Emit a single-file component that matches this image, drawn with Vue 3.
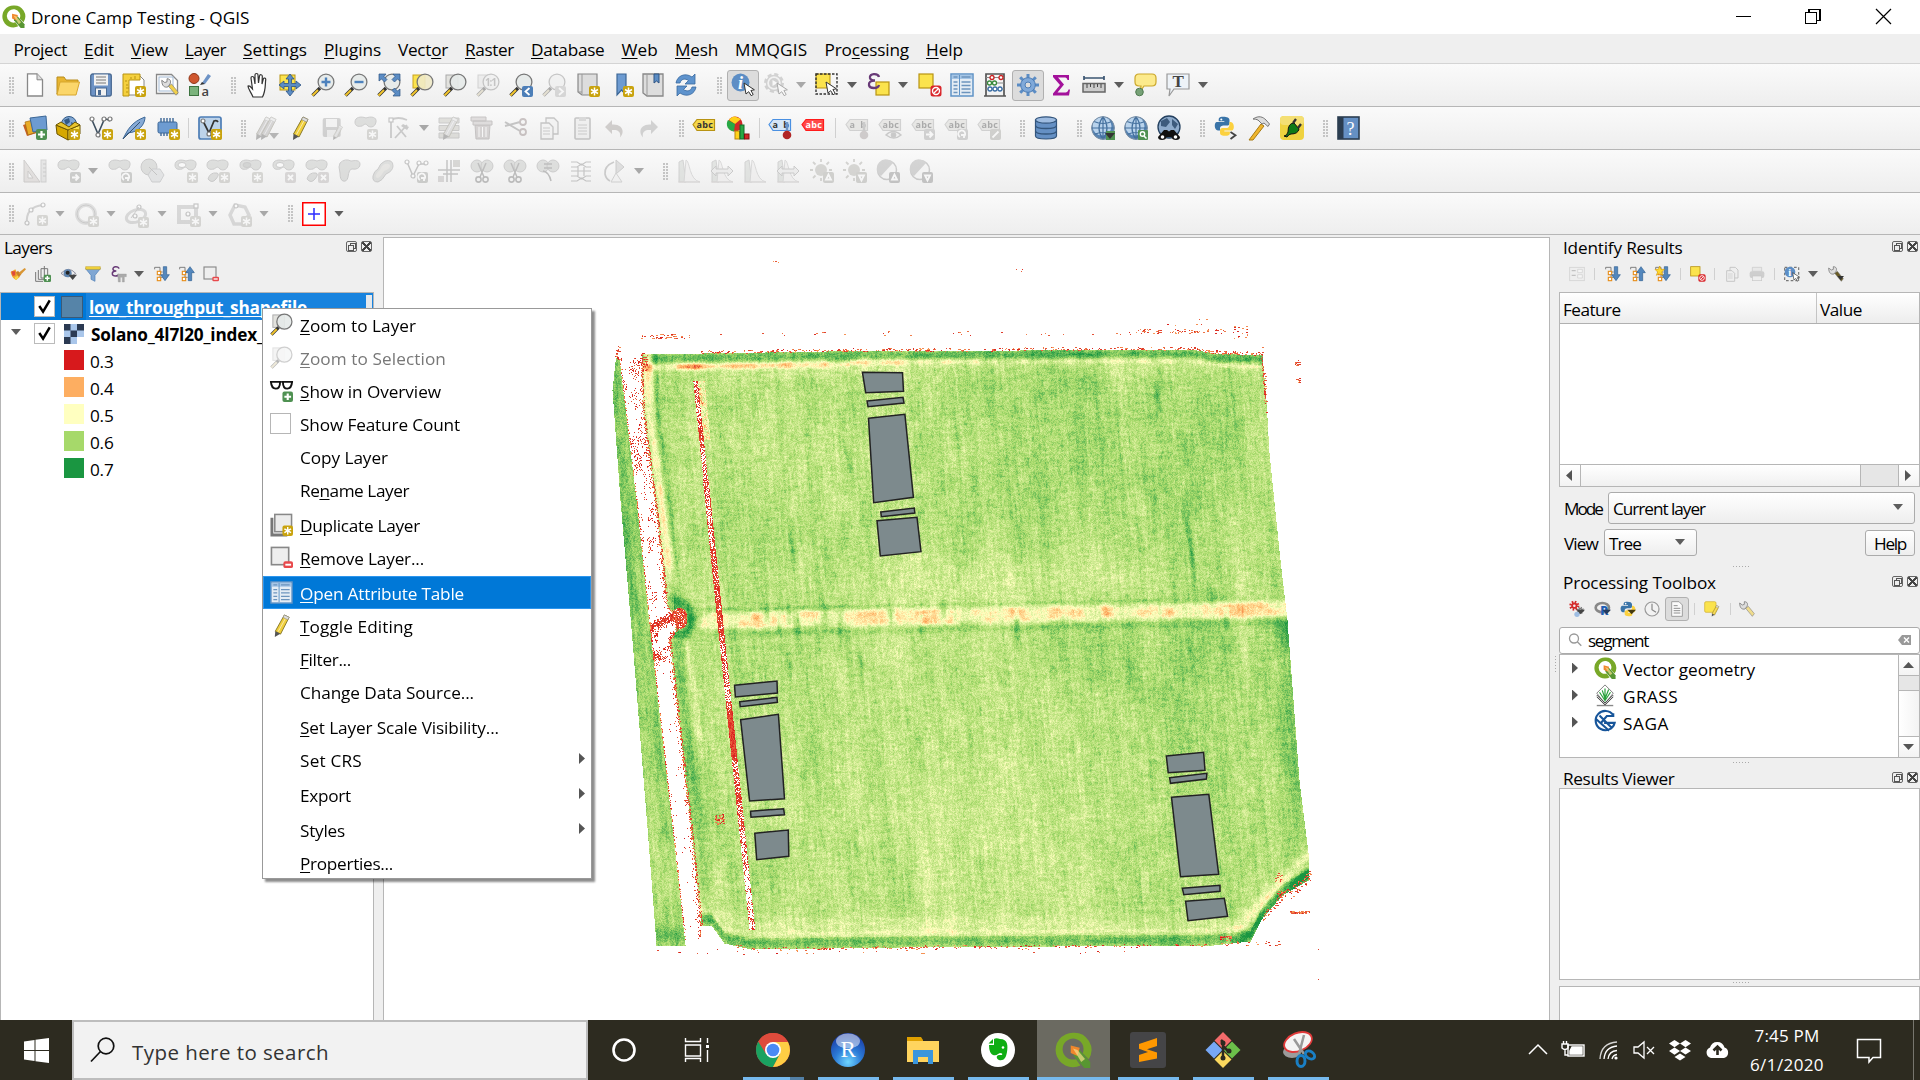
<script setup>
import { ref, onMounted } from 'vue'

/* Adjusts tracking so that a label takes the given width */
const vFit = {
  mounted(el, { value }) {
    if (!value) return
    const w = el.getBoundingClientRect().width
    el.style.letterSpacing = (value - w) / el.textContent.length + 'px'
  }
}
/* "&Open" -> underlined mnemonic */
const mn = (s) => s.replace(/&(.)/, '<u>$1</u>')

/* ---------- icon drawing ---------- */
const star = (c = '#c9a30e') => `<rect x="13" y="13" width="11" height="11" rx="2" fill="${c}"/><path d="M18.500 14.500v8M15 16.500l7 4M22 16.500l-7 4" stroke="#fff" stroke-width="1.500"/>`
const plusB = `<rect x="13" y="13" width="11" height="11" rx="2" fill="#4f9152"/><path d="M18.500 15v7M15 18.500h7" stroke="#fff" stroke-width="2.200"/>`
const badge = (d, c = '#777') => `<rect x="13" y="13" width="11" height="11" rx="2" fill="${c}"/><path d="${d}" stroke="#fff" stroke-width="1.800" fill="none"/>`
const arrowR = 'M15 18.500h6M18.500 15.500l3 3-3 3'
const cross = 'M16 16l5 5M21 16l-5 5'
const rot = 'M16 21a3.500 3.500 0 1 1 4.500-1M20 22v-3h-3'
const up = 'M18.500 15.500l-2.500 5h5z'
const dn = 'M18.500 21.500l-2.500-5h5z'
const handle = `<path d="M9 15l-7.500 7.500" stroke="#333" stroke-width="3.400"/><path d="M7 17l-5.500 5.500" stroke="#f3c62d" stroke-width="2"/>`
const mag = (inner = '', back = '') => `${back}${handle}<circle cx="15" cy="9" r="7.900" fill="#e6eae9" fill-opacity=".9" stroke="#777" stroke-width="1.300"/>${inner}`
const cursor = (x, y) => `<path transform="translate(${x} ${y})" d="M0 0l2 11 2.700-2.300 2.500 4 2-1.200-2.300-4 3.500-.7z" fill="#fff" stroke="#333" stroke-width="1"/>`
const blob = (y = 0) => `<path transform="translate(0 ${y})" d="M1 6c0-5 6-6 11-4 5-2 11-1 10 4-1 6-7 6-9 3-2-2-3 0-5 1C4 11 1 10 1 6z" fill="#b5bab0" stroke="#888" stroke-width="1"/>`
const pencil = (c = '#f0cf3c') => `<path d="M15 1l5 2.500L11 21 5.500 18z" fill="${c}" stroke="#7d6d20" stroke-width=".9"/><path d="M17 3L8.500 18.500" stroke="#fff" stroke-opacity=".6"/><path d="M5.500 18l5.300 2.500L5 24z" fill="#555"/><path d="M15 1l5 2.500-1.500 2.500-5-2.500z" fill="#ddd" stroke="#888" stroke-width=".6"/>`
const tag = (c, s, t = 'abc', tc = '#333', y = 3) => `<path d="M1 ${y + 5.500}l4-5h17.500v11H5z" fill="${c}" stroke="${s}" stroke-width="1.200"/><text x="4.500" y="${y + 9}" font-family="Open Sans,sans-serif" font-weight="700" font-size="9" textLength="16.500" fill="${tc}">${t}</text>`
const globe = `<circle cx="12" cy="12" r="11.500" fill="#5683b3"/><circle cx="11" cy="10" r="9.500" fill="#b9d3ec"/><path d="M12 .5v23M.5 12h23M3 5.500q9 4 18 0M3 18.500q9-4 18 0M12 .5q-8 11.500 0 23M12 .5q8 11.500 0 23" fill="none" stroke="#44709e" stroke-width="1.200"/><circle cx="12" cy="12" r="11.300" fill="none" stroke="#7c8fa3"/>`
const tri = (x, y, c = '#5d5d5d') => `<path d="M${x} ${y}h10l-5 6z" fill="${c}"/>`
const qlogo = `<path d="M12 .5a11.500 11.500 0 1 0 5 21.800l-3-4.200a7 7 0 1 1 4.500-4l4 4A11.500 11.500 0 0 0 12 .5z" fill="#78a828"/><path d="M12 11.500l4.500.5 7 8v4h-4l-7-8z" fill="#589632"/><path d="M10.500 9l6 1.500-1.500 5.500-4.500-2z" fill="#f0872c"/><path d="M12 11l3 1 5 6-2.500 2z" fill="#f5e08a" opacity=".7"/>`
const scis = `<ellipse cx="7" cy="7" rx="6" ry="6" fill="#b5bab0" stroke="#888"/><ellipse cx="17" cy="7" rx="6" ry="6" fill="#b5bab0" stroke="#888"/><path d="M8 4l6 14M16 4L10 18" stroke="#666" stroke-width="1.500"/><circle cx="8.500" cy="20.500" r="2.600" fill="none" stroke="#666" stroke-width="1.600"/><circle cx="15.500" cy="20.500" r="2.600" fill="none" stroke="#666" stroke-width="1.600"/>`
const hist = `<path d="M2 23V3l4-2 3 22z" fill="#b7cbb7" stroke="#999"/><path d="M9 1c4 1 3 20 14 22H7z" fill="#eee6e6" stroke="#aaa"/><path d="M1 23h22" stroke="#c9a9a9"/>`
const wide = `<path d="M1 12l5-5v3h12V7l5 5-5 5v-3H6v3z" fill="#ddd" stroke="#888"/>`
const sun = `<circle cx="11" cy="11" r="6" fill="#a9a38a"/><path d="M11 0v3M11 19v3M0 11h3M19 11h3M3 3l2.500 2.500M19 3l-2.500 2.500M3 19l2.500-2.500" stroke="#a09a80" stroke-width="1.800"/>`
const contrast = `<circle cx="11" cy="11" r="9.500" fill="#f2f2f2" stroke="#888" stroke-width="1.500"/><path d="M17 4A9 9 0 1 0 5 17z" fill="#9c9c9c"/>`
const tree = (arrow) => `<path d="M1 2h8v20M9 9h4M9 17h4M1 2v3" fill="none" stroke="#777" stroke-width="1.400"/><rect x="5" y="8" width="5" height="5" fill="#fff" stroke="#e88f1c" stroke-width="1.700"/><rect x="5" y="17" width="5" height="5" fill="#fff" stroke="#e88f1c" stroke-width="1.700"/><path d="${arrow}" fill="#5387bd" stroke="#2f5f93"/>`
const aDown = 'M14 1h5v12h4l-6.500 9-6.500-9h4z'
const aUp = 'M14 22h5V10h4L16.500 1 10 10h4z'
const gear = (cx, cy, r, c) => `<circle cx="${cx}" cy="${cy}" r="${r}" fill="none" stroke="${c}" stroke-width="${r * .75}" stroke-dasharray="${r * .4} ${r * .385}"/><circle cx="${cx}" cy="${cy}" r="${r * .6}" fill="none" stroke="${c}" stroke-width="${r * .5}"/>`
const table = `<rect x="1" y="1" width="22" height="22" fill="#e4ecf4" stroke="#5f93c6" stroke-width="1.500"/><rect x="2" y="2" width="20" height="4" fill="#a5c5e6"/><path d="M9.500 2v20" stroke="#5f93c6"/><path d="M3.500 4h4M11.500 4h9M3.500 9h4M11.500 9h9M3.500 12.500h4M11.500 12.500h9M3.500 16h4M11.500 16h9M3.500 19.500h4M11.500 19.500h9" stroke="#6c94bd" stroke-width="1.300"/>`
const wrench = (c1, c2) => `<path d="M10 11l4-3 9 11-3 4z" fill="${c2}" stroke="#777" stroke-width=".8"/><path d="M1 3l4 3 3-1V1c4 0 6 3 4 7l-3 4c-4 1-8-1-8-9z" fill="${c1}" stroke="#666"/>`
const py = `<path d="M11 1c-6 0-5.500 2-5.500 5H12v1H3c-3 1-3 9 1.500 10H7v-3c0-2 2-3 4-3h4c2 0 3-1 3-3V5c0-3-3-4-7-4z" fill="#3a74a8"/><path d="M13 23c6 0 5.500-2 5.500-5H12v-1h9c3-1 3-9-1.500-10H18v3c0 2-1 4-3 4h-5c-2 0-3 1-3 3v3c0 2 3 3 6 3z" fill="#fcd13f"/><circle cx="8.500" cy="4" r="1.200" fill="#fff"/>`
const node = 'fill="#fff" stroke="#777" stroke-width="1.200"'

const icons = {
  qlogo,
  new: `<path d="M4.500 .8h9.500l5.500 6V23h-15z" fill="#fff" stroke="#888" stroke-width="1.300"/><path d="M14 .8v6h5.500" fill="#ddd" stroke="#888"/>`,
  open: `<path d="M1 21V4h7l2 3h12v4H5z" fill="#e8b531" stroke="#b98d1c"/><path d="M4 9h19.500L20 22H1z" fill="#fbd66a" stroke="#d7a62d"/>`,
  save: `<rect x="1.700" y="1" width="20.600" height="22" rx="2" fill="#6d93c6" stroke="#4b6b93" stroke-width="1.300"/><rect x="5" y="1.500" width="14" height="11" fill="#f2f2f2"/><path d="M7 4h10M7 7h10M7 10h10" stroke="#777" stroke-width="1.200"/><rect x="6.500" y="15" width="11" height="8" fill="#f2f2f2" stroke="#4b6b93"/><rect x="9" y="17" width="3" height="5" fill="#4b6b93"/>`,
  newlayout: `<path d="M2 2h15l5 5v15H2z" fill="#fff" stroke="#888"/><path d="M1 1h17v6H7v16H1z" fill="#f5d03d" stroke="#b89313"/><path d="M4 7v2M4 12h2M4 15h3M4 19h2M9 4v2M13 3v3" stroke="#b89313"/>${star()}`,
  mgr: `<path d="M1.500 1.500h15l6 6v13h-21z" fill="#fff" stroke="#888" stroke-width="1.300"/><rect x="4" y="4" width="14" height="14" fill="none" stroke="#a3bad4"/><g transform="translate(6 5) scale(.75)">${wrench('#ddd', '#f0cf4a')}</g>`,
  style: `<circle cx="6" cy="5.500" r="5" fill="#d0572f" stroke="#8f3517"/><path d="M14 10l6-9 3 2-6 8z" fill="#6d93c6"/><path d="M12 12l2-3 3 2z" fill="#333"/><rect x="1.500" y="13.500" width="9" height="9" fill="#7bb37c" stroke="#3d7340"/><text x="13.500" y="23" font-family="Open Sans" font-weight="600" font-size="13" fill="#444">a</text>`,
  hand: `<path d="M8 24c-2-5-5-8-5-11 2-1 3.500 2 4.500 3L6 5c0-2 2.600-2 3 0l1 6V2c0-2 3-2 3 0l.5 8 1-7c.4-2 3-1.500 2.800.5L17 11l1.300-5c.7-1.700 2.800-1 2.400.8C20 12 21 17 17.500 24z" fill="#fff" stroke="#333" stroke-width="1.200"/>`,
  pan: `<rect x="2" y="2" width="15" height="15" fill="#fbe34d" stroke="#b89313"/><path d="M12 1l4 5h-2.500v4.500H18V8l5 4-5 4v-2.500h-4.500V18H16l-4 5-4-5h2.500v-4.500H6V16l-5-4 5-4v2.500h4.500V6H8z" fill="#5b8cc4" stroke="#2f5483" stroke-width=".8"/>`,
  zin: mag('<path d="M15 4.500v9M10.500 9h9" stroke="#4d82bd" stroke-width="2.400"/>'),
  zout: mag('<path d="M10.500 9h9" stroke="#4d82bd" stroke-width="2.400"/>'),
  zfull: mag('<path d="M2 1h7L7 3.500l3 3L7.500 9l-3-3L2 8zM23 1h-7l2 2.500-3 3L17.500 9l3-3L23 8zM23 23h-7l2-2.500-3-3 2.500-2.500 3 3 2.500-2z" fill="#5b8cc4" stroke="#2f5483" stroke-width=".7"/>'),
  zsel: mag('', '<rect x="3" y="2" width="12" height="13" fill="#fbe34d" stroke="#c9a41f"/>').replace('#e6eae9', '#efeac8'),
  zlay: mag('', '<rect x="3" y="2" width="12" height="13" fill="#e2e2de" stroke="#aaa"/>'),
  z11: mag('<text x="9" y="13" font-family="Open Sans" font-weight="700" font-size="10" textLength="12" fill="#777">1:1</text>', '<rect x="2" y="2" width="12" height="13" fill="#ddd" stroke="#999"/>'),
  zlast: mag(badge('M20.500 15l-4 3.500 4 3.500', '#4d7fb8')),
  znext: mag(badge('M17 15l4 3.500-4 3.500', '#aaa')),
  newview: `<path d="M2 1h19v21H6l-4-3z" fill="#ddd" stroke="#888" stroke-width="1.200"/><path d="M6 1v20M2 19h4" stroke="#999"/>${star()}`,
  newbm: `<path d="M7 1h9v21l-4.500-5L7 22z" fill="#6d9bd1" stroke="#3c6796" stroke-width="1.200"/>${star()}`,
  bm: `<path d="M2 1h20v22H6l-4-3z" fill="#ddd" stroke="#888" stroke-width="1.300"/><path d="M6 1v21" stroke="#999"/><path d="M13 1h5v9l-2.500-2-2.500 2z" fill="#5b8cc4" stroke="#2f5483"/>`,
  refresh: `<path d="M2 10C3 3 11-1 18 4l3-3v10H11l3.500-3.500C11 5 7 6 6 10z" fill="#5e93cd" stroke="#3a6a9f" stroke-width=".8"/><path d="M22 14c-1 7-9 11-16 6l-3 3V13h10l-3.500 3.500C13 19 17 18 18 14z" fill="#5e93cd" stroke="#3a6a9f" stroke-width=".8"/>`,
  ident: `<circle cx="9.500" cy="9.500" r="9" fill="#5d8ec5"/><text x="7" y="16" font-family="Liberation Serif" font-style="italic" font-weight="700" font-size="18" fill="#fff">i</text>${cursor(13, 10)}`,
  action: `<circle cx="10" cy="10" r="8.500" fill="none" stroke="#999" stroke-width="3" stroke-dasharray="4 2.670"/><circle cx="10" cy="10" r="7.500" fill="#eee" stroke="#999" stroke-width="1.500"/><circle cx="10" cy="10" r="5" fill="#999"/><path d="M8.500 7l5 3-5 3z" fill="#fff"/>${cursor(13, 10)}`,
  select: `<rect x="1" y="1" width="14" height="14" fill="#fbe34d" stroke="#b89313"/><rect x="1" y="1" width="21" height="20" fill="none" stroke="#333" stroke-width="1.400" stroke-dasharray="2.500 1.500"/>${cursor(11, 9)}`,
  eps: `<rect x="9" y="9" width="13" height="13" fill="#fbe34d" stroke="#b89313" stroke-width="1.200"/><path d="M12 4C11 0 2 0 3 5c.5 2 3 2.500 5 2.500C4 7.500 1.500 9 2 12c.5 4 9 4 10 0" fill="none" stroke="#683a77" stroke-width="2.300"/>`,
  desel: `<rect x="1" y="1" width="14" height="14" fill="#fbe34d" stroke="#b89313" stroke-width="1.200"/><rect x="12.500" y="12.500" width="11" height="11" rx="2.500" fill="#d9262b"/><circle cx="18" cy="18" r="3.500" fill="none" stroke="#fff" stroke-width="1.400"/><path d="M15.700 20.300l4.600-4.600" stroke="#fff" stroke-width="1.300"/>`,
  table,
  abacus: `<path d="M3 23V1h18v22M1 23h22" fill="none" stroke="#555" stroke-width="1.700"/><path d="M3 4.500h18M3 10h18M3 16h18" stroke="#888"/><g fill="#fff" stroke-width="1.300"><g stroke="#cc2222"><circle cx="9" cy="4.500" r="2"/><circle cx="18" cy="4.500" r="2"/></g><g stroke="#38893b"><circle cx="6.500" cy="10" r="2"/><circle cx="11.500" cy="10" r="2"/></g><g stroke="#3a6da4"><circle cx="7" cy="16" r="2"/><circle cx="12" cy="16" r="2"/><circle cx="17" cy="16" r="2"/></g></g>`,
  gear: `<path d="M12 1v22M1 12h22M4.200 4.200l15.600 15.600M19.800 4.200L4.200 19.800" stroke="#5b8cc4" stroke-width="3"/><circle cx="12" cy="12" r="7.300" fill="#80a9d9" stroke="#4c7db6"/><circle cx="12" cy="12" r="3" fill="#ddd" stroke="#4c7db6"/>`,
  sigma: `<path d="M4 2h16v5h-1.500C18 5 17 4.500 15 4.500H9l6 7-6.500 8H15c2.500 0 4-.5 4.500-3H21l-1 6H4v-2l7-8.500L4 4z" fill="#a3119b"/>`,
  ruler: `<path d="M2 5h20M2 3v4M22 3v4" stroke="#3b5572" stroke-width="1.700"/><rect x="1" y="10.500" width="22" height="8.500" fill="#ccc" stroke="#666" stroke-width="1.500"/><path d="M5 11v4M8.500 11v3M12 11v4M15.500 11v3M19 11v4" stroke="#444"/>`,
  tip: `<path d="M6 1h13q4 0 4 4v4q0 4-4 4h-8l-4 6 1-6H6q-4 0-4-4V5q0-4 4-4z" fill="#fcea8c" stroke="#cba72b" stroke-width="1.200"/><circle cx="6.500" cy="19" r="3.800" fill="#77a177" stroke="#4f7a50"/>`,
  text: `<path d="M1 1h22v15H8l-5 7 1-7H1z" fill="#eef3f8" stroke="#999" stroke-width="1.200"/><text x="6.500" y="14" font-family="Liberation Serif" font-size="17" font-weight="700" fill="#444">T</text>`,

  dsm: `<path d="M0 9l12-4 5 11L4 20z" fill="#c65f22"/><path d="M2 6l12-3 3 12-12 4z" fill="#e9ac28" stroke="#a36c10" stroke-width=".7"/><path d="M7 2l16-2 1 14-14 2z" fill="#6d9bd1" stroke="#3c6796"/>${plusB}`,
  geop: `<circle cx="13" cy="8" r="7.500" fill="#7fa6d3" stroke="#335a85"/><path d="M8 4l5-2 1 4-4 3zM15 6l4 2-3 4z" fill="#335a85"/><path d="M0 9l12 5v10L1 18z" fill="#d6a800" stroke="#6c5500"/><path d="M12 14l12-5v9l-12 6z" fill="#fbe34d" stroke="#6c5500"/><path d="M0 9l5-3 8 5 6-5 5 3-12 5z" fill="#e9c52c" stroke="#6c5500"/>${star()}`,
  vnew: `<path d="M3 4l6 14 6-14q3-2 6 1" fill="none" stroke="#3d4f5f" stroke-width="1.600"/><circle cx="3" cy="3" r="2" ${node}/><circle cx="9" cy="19" r="2" ${node}/><circle cx="15" cy="3" r="2" ${node}/><circle cx="21" cy="3" r="2" ${node}/>${star()}`,
  feather: `<path d="M1 23C5 15 9 6 23 1c0 5-3 12-12 15L6 17z" fill="#86aad6" stroke="#3c6796"/><path d="M1 23L18 6" stroke="#35516f"/>${star()}`,
  chip: `<path d="M5 2v18M8 2v18M11 2v18M14 2v18M17 2v18" stroke="#3c6796" stroke-width="1.400"/><rect x="2" y="6" width="19" height="11" rx="1.500" fill="#6d9bd1" stroke="#3c6796"/>${star()}`,
  vvirt: `<rect x="1" y="1" width="22" height="22" rx="2" fill="#bdd3ea" stroke="#4c7db6" stroke-width="1.700"/><path d="M5 5l6 12 5-12q3-1 4 1" fill="none" stroke="#333" stroke-width="1.700"/><circle cx="5" cy="5" r="2" ${node}/><circle cx="11" cy="18" r="2" ${node}/>${star()}`,
  pencils: `<g transform="translate(-4 0)">${pencil('#a99f9f')}</g><g transform="translate(1 0)">${pencil('#a99f9f')}</g>${tri(14, 17, '#555')}`,
  pencil: pencil(),
  saveEd: `<rect x="1.700" y="2" width="18" height="19" rx="2" fill="#999"/><rect x="5" y="3" width="11" height="8" fill="#eee"/><rect x="6" y="14" width="9" height="7" fill="#ddd"/><g transform="translate(9 9) scale(.62)">${pencil('#bbb')}</g>`,
  addblob: blob() + star('#aaa68c'),
  nodes: `<path d="M4 22V4q7-4 16 0M10 10l9 11M20 9L8 22" fill="none" stroke="#888" stroke-width="1.800"/><path d="M16 8l6 3-2 3-6-4z" fill="#888"/><rect x="2" y="2" width="4" height="4" ${node}/>`,
  rows: `<path d="M1 2h20v5H1zM1 9.500h20v5H1zM1 17h20v5H1z" fill="#bfbb98" stroke="#888"/>${pencil('#bbb')}`,
  trash: `<path d="M5 9h15l-1 14H6z" fill="#b89a9a" stroke="#887070"/><path d="M3 5h19v4H3zM1 1h15v4H1z" fill="#c9b1b1" stroke="#887070"/><path d="M9 11v10M12.500 11v10M16 11v10" stroke="#fff"/>`,
  cut: `<path d="M1 6l15 9M1 10l15-4" stroke="#777" stroke-width="2"/><circle cx="19" cy="6" r="3" fill="none" stroke="#a66" stroke-width="1.800"/><circle cx="19" cy="16" r="3" fill="none" stroke="#a66" stroke-width="1.800"/>`,
  copy: `<path d="M9 2h8l4 4v12H9z" fill="#eee" stroke="#777" stroke-width="1.300"/><path d="M4 7h8l4 4v12H4z" fill="#eee" stroke="#777" stroke-width="1.300"/><path d="M6 12h7M6 15h7M6 18h7" stroke="#888"/>`,
  paste: `<rect x="5" y="2" width="15" height="21" rx="1" fill="#e5e5e5" stroke="#777" stroke-width="1.600"/><rect x="9" y="1" width="7" height="4" fill="#aaa"/><path d="M8 9h9M8 12h9M8 15h9M8 18h9" stroke="#888"/>`,
  undo: `<path d="M2 11l7-7v4.500c9-1 14 6 8 13 1-5-1-8-8-7.500V18z" fill="#a58c7c"/>`,
  redo: `<path d="M22 11l-7-7v4.500c-9-1-14 6-8 13-1-5 1-8 8-7.500V18z" fill="#999"/>`,
  abcY: tag('#f6d84a', '#b89313'),
  diag: `<circle cx="9" cy="8" r="7.500" fill="#d02828"/><path d="M9 8L9 .5A7.500 7.500 0 0 0 3 4z" fill="#ffd21a"/><path d="M9 8L2 4a7.500 7.500 0 0 0 6 11.500z" fill="#27a845"/><path d="M9 .5v7.500l6-5z" fill="#ffd21a"/><rect x="9" y="15" width="4.500" height="8" fill="#ffd21a" stroke="#b8860b"/><rect x="14" y="9" width="4" height="14" fill="#27a845" stroke="#136b29"/><rect x="18.500" y="18" width="4.500" height="5" fill="#d02828" stroke="#801111"/>`,
  abcB: tag('#d6e6f7', '#4a90e2', 'ab') + `<path d="M19 6v12" stroke="#6d93c6" stroke-width="2.500"/><circle cx="19" cy="19" r="4.300" fill="#b12525"/>`,
  abcR: tag('#ff4a4a', '#ff1a1a', 'abc', '#fff'),
  g1: tag('#d5d2bd', '#999', 'ab') + `<path d="M19 6v12" stroke="#888" stroke-width="2.500"/><circle cx="19" cy="19" r="4.300" fill="#a88"/>`,
  g2: tag('#d5d2bd', '#999') + `<path d="M8 19q7-7 15 0q-7 6-15 0z" fill="#eee" stroke="#888" stroke-width="1.400"/><circle cx="15.500" cy="19" r="2.800" fill="#888"/>`,
  g3: tag('#d5d2bd', '#999') + badge(arrowR, '#999'),
  g4: tag('#d5d2bd', '#999') + badge(rot, '#999'),
  g5: tag('#d5d2bd', '#999') + badge('M15.500 21.500l6-6', '#999981'),
  dbase: `<path d="M1.500 4v16c0 4 21 4 21 0V4z" fill="#6590c4" stroke="#33557c" stroke-width="1.200"/><ellipse cx="12" cy="4" rx="10.500" ry="3.200" fill="#9dbbe0" stroke="#33557c" stroke-width="1.200"/><path d="M1.500 9.500c0 4 21 4 21 0M1.500 15c0 4 21 4 21 0" fill="none" stroke="#33557c" stroke-width="1.300"/>`,
  gl1: globe + `<rect x="15" y="15" width="9" height="9" fill="#4f9152"/><path d="M14 17h10l-5 6z" fill="#333"/>`,
  gl2: globe + `<rect x="14" y="14" width="10" height="10" rx="1" fill="#4f9152"/><circle cx="18.500" cy="18" r="2.200" fill="none" stroke="#fff" stroke-width="1.400"/><path d="M20 20l2.500 2.500" stroke="#fff" stroke-width="1.500"/>`,
  gl3: `<circle cx="12" cy="11" r="11" fill="#8eabcb" stroke="#24405f" stroke-width="1.300"/><path d="M4 5l6-3 3 4-4 5-5-1zM15 3l6 5-3 5-3-4z" fill="#3d5b7c"/><path d="M7 14h3l2 1.500 2-1.500h3l6 7q0 3-4 3t-4.500-3h-5Q9 24 5 24t-4-3z" fill="#111"/><circle cx="5.500" cy="21" r="1.800" fill="#fff"/><circle cx="18.500" cy="21" r="1.800" fill="#fff"/>`,
  py: `<g transform="scale(.86)">${py}</g><path d="M16.500 16l5 3.200-5 3.800" fill="none" stroke="#444" stroke-width="1.800"/>`,
  hammer: `<path d="M14 8l3 2L6 24H2z" fill="#f0b62d" stroke="#a87b12"/><path d="M6 3c6-4 10-2 13 1l3.500 4-1.500 2.500-4-3.500-2 1-4-4q-2-1-5-1z" fill="#ddd" stroke="#777"/>`,
  plug: `<rect width="24" height="24" rx="4" fill="#efd23f"/><rect width="24" height="9" rx="4" fill="#f4df74"/><path d="M4 20q3 0 4-4 0-9 6-9l5 6q-1 5-8 5-2 0-4 3z" fill="#0f7a17" stroke="#111"/><path d="M13 7l3-4M18 12l3-4" stroke="#333" stroke-width="2.300"/>`,
  help: `<rect x="1" y="1" width="21" height="22" fill="#6590c4" stroke="#2b3d50" stroke-width="1.600"/><rect x="1" y="1" width="5.500" height="22" fill="#2b3d50"/><text x="9.500" y="18.500" font-family="Liberation Serif" font-size="18" fill="#fff">?</text>`,

  cad: `<path d="M1 1v22h16z" fill="#d5bdb0" stroke="#998880"/><path d="M5 12v7h5z" fill="#f2f2f2" stroke="#998880"/><rect x="18" y="1" width="5" height="22" fill="#ccc" stroke="#999"/><path d="M20 5h3M20 9h3M20 13h3M20 17h3" stroke="#888"/>`,
  b1: blob() + badge(arrowR, '#8c8f84'),
  b2: blob() + badge(rot, '#8c8f84'),
  b3: `<circle cx="9" cy="8" r="8" fill="#b5bab0" stroke="#888"/><path d="M12 10h8l4 6-4 7h-8l-4-7z" fill="#c2ccd8" stroke="#8a95a3"/><path d="M9 8l8 8" stroke="#777"/>`,
  b4: blob() + `<ellipse cx="8" cy="6" rx="4" ry="2.500" fill="#fff" stroke="#888"/>` + star('#aaa68c'),
  b5: blob() + `<path d="M2 20q2-7 9-6 3 1-1 6t-8 0z" fill="#b5bab0" stroke="#888"/>` + star('#aaa68c'),
  b6: blob() + `<ellipse cx="8" cy="6" rx="4" ry="2.500" fill="#9a9f95" stroke="#888"/>` + star('#aaa68c'),
  b7: blob() + `<ellipse cx="8" cy="6" rx="4" ry="2.500" fill="#fff" stroke="#888"/>` + badge(cross, '#b6a4a4'),
  b8: blob() + `<path d="M2 20q2-7 9-6 3 1-1 6t-8 0z" fill="#b5bab0" stroke="#888"/>` + badge(cross, '#b6a4a4'),
  b9: `<path d="M2 4q5-5 11-2 10-2 9 4-1 5-8 4-3 0-4 8-1 5-5 4-3-1-3-8-2-7 0-10z" fill="#b5bab0" stroke="#888"/>`,
  b10: `<path d="M14 2q8-2 8 5 0 5-7 8-4 7-8 8-6 0-5-6 1-5 5-7 2-6 7-8z" fill="#b5bab0" stroke="#888"/><path d="M14 5q5-1 5 2t-6 5q-4 7-6 7-3 0-2-3 1-3 4-5 2-5 5-6z" fill="#d5cdb4"/>`,
  b11: `<path d="M3 3l6 14 6-12 7 0" fill="none" stroke="#777" stroke-width="1.500"/><circle cx="3" cy="3" r="2" ${node}/><circle cx="9" cy="17" r="2" ${node}/><circle cx="15" cy="4" r="2" ${node}/><circle cx="22" cy="4" r="2" ${node}/>` + badge(rot, '#8c8f84'),
  b12: `<path d="M10 1v22M14 1v22M1 11h22M6 15h15" stroke="#777" stroke-width="1.500"/><rect x="16" y="1" width="7" height="7" fill="#aaa68c"/><rect x="1" y="17" width="6" height="6" fill="#b6a4a4"/>`,
  sc: scis,
  b13: `<ellipse cx="7" cy="7" rx="6" ry="6" fill="#b5bab0" stroke="#888"/><ellipse cx="17" cy="7" rx="6" ry="6" fill="#b5bab0" stroke="#888"/><path d="M8 5h8M8 9h8M7 12q6 1 8 10" stroke="#666" stroke-width="1.500" fill="none"/>`,
  b14: `<path d="M2 3h6l3 2h3l3-2h5M2 8h6l3-2h3l3 2h5M2 12h20M2 17h6l3 2h3l3-2h5M2 22h6l3-2h3l3 2h5M9 8v9M15 8v9" stroke="#777" stroke-width="1.200" fill="none"/>`,
  b15: `<path d="M14 1l8 7-8 7z" fill="#bbb" stroke="#888"/><path d="M9 23l5-9 6 9z" fill="#eee" stroke="#999"/><path d="M12 3Q2 7 3 15q1 5 5 7" fill="none" stroke="#888" stroke-width="1.700"/>`,
  h1: hist, h2: hist + wide,
  s1: sun + badge(up, '#999981'), s2: sun + badge(dn, '#999981'),
  c1: contrast + badge(up), c2: contrast + badge(dn),

  d1: `<path d="M3 22Q1 5 19 3" fill="none" stroke="#999" stroke-width="2"/><circle cx="3" cy="21" r="2" ${node}/><circle cx="19" cy="3" r="2" ${node}/><circle cx="7" cy="8" r="2" ${node}/>` + star('#aaa68c'),
  d2: `<circle cx="11" cy="11" r="9" fill="none" stroke="#bbb" stroke-width="4"/><circle cx="11" cy="11" r="9" fill="none" stroke="#888"/>` + star('#aaa68c'),
  d3: `<ellipse cx="11" cy="12" rx="10" ry="6" transform="rotate(-20 11 12)" fill="none" stroke="#aaa" stroke-width="3"/><circle cx="10" cy="12" r="2" ${node}/><circle cx="14" cy="3" r="2" ${node}/><path d="M6 14l8-11" stroke="#888"/>` + star('#aaa68c'),
  d4: `<rect x="2" y="4" width="17" height="15" fill="none" stroke="#aaa" stroke-width="4"/><circle cx="11" cy="11" r="2" ${node}/><rect x="17" y="1" width="4" height="4" ${node}/>` + star('#aaa68c'),
  d5: `<path d="M7 2l10 2 4 8-7 9H6l-4-9z" fill="none" stroke="#aaa" stroke-width="3.500"/><circle cx="8" cy="3" r="2" ${node}/>` + star('#aaa68c'),
  plusbox: `<rect x=".75" y=".75" width="22.500" height="22.500" fill="#fff" stroke="#f00" stroke-width="1.500"/><path d="M12 6v12M6 12h12" stroke="#2b2bff" stroke-width="1.500"/>`,

  brush: `<path d="M1 9l7-4 2 4 5 7-6 5Q2 17 1 9z" fill="#f0a52d"/><path d="M2 8l6 0 0 6-4 1z" fill="#df4b3c"/><path d="M7 17l6-3-1 5-4 2z" fill="#f6d84a"/><path d="M9 10l3-3 5 6-4 3z" fill="#c77f2a"/><path d="M13 10l9-7 2 2-8 8z" fill="#d99634"/>`,
  addgrp: `<path d="M1 9v14h11M5 6v14h12M9 4h10v14H9zM14 0v14" fill="none" stroke="#777" stroke-width="1.500"/>${plusB}`,
  eye: `<path d="M0 11Q11-1 22 11 11 21 0 11z" fill="#eee" stroke="#889" stroke-width="1.400"/><circle cx="10" cy="11" r="6" fill="#5d83ae"/><circle cx="10" cy="10" r="3" fill="#222"/><path d="M11 13h13l-6.500 8z" fill="#444"/>`,
  funnel: `<path d="M1 4h22l-8 10v9l-6-3v-6z" fill="#7fa6d3" stroke="#4c7db6"/><path d="M1 1h22v4H1z" fill="#f4d53e" stroke="#b89313" stroke-width=".7"/>`,
  epsf: `<path d="M12 4C11 0 2 0 3 5c.5 2 3 2.500 5 2.500C4 7.500 1.500 9 2 12c.5 4 9 4 10 0" fill="none" stroke="#683a77" stroke-width="2.300"/><path d="M10 12h13v4l-3 0v8h-3v-7h-3v7h-3z" fill="#aaa" stroke="#999" stroke-width=".5"/>`,
  exp: tree(aDown), col: tree(aUp),
  expnew: tree(aDown) + `<path d="M7 0l2 5 5 0-4 4 2 5-5-3-5 3 2-5-4-4 5 0z" fill="#ffd92e" stroke="#d79d0a"/>`,
  rem: `<rect x="1.500" y="1.500" width="18" height="18" fill="#eee" stroke="#888" stroke-width="1.700"/><rect x="14" y="16" width="10" height="7" rx="2" fill="#e8494c"/><path d="M16 19.500h6" stroke="#fff" stroke-width="2"/>`,
  dup: `<path d="M2 5v18h16" fill="none" stroke="#777" stroke-width="3"/><rect x="5" y="1.500" width="17.500" height="18" fill="#ececec" stroke="#888" stroke-width="1.600"/>${star()}`,
  form: `<rect x="1" y="2" width="22" height="20" fill="#eee" stroke="#aaa" stroke-width="1.300"/><path d="M4 7h6M4 14h6" stroke="#777" stroke-width="2"/><path d="M13 5h7v5h-7zM13 13h7v5h-7z" fill="#fff" stroke="#999"/>`,
  printer: `<path d="M5 2h14v6H5z" fill="#ddd" stroke="#888"/><rect x="1" y="8" width="22" height="10" rx="3" fill="#999"/><rect x="5" y="15" width="14" height="7" fill="#eee" stroke="#888"/>`,
  identm: `<rect x="1" y="2" width="21" height="20" fill="none" stroke="#777" stroke-width="1.800" stroke-dasharray="4 3"/><circle cx="9" cy="9" r="8" fill="#5d8ec5"/><text x="6.500" y="15" font-family="Liberation Serif" font-weight="700" font-size="16" fill="#fff">i</text>${cursor(13, 10)}`,
  wrench: wrench('#ddd', '#f0dc8c'),
  wrenchd: wrench('#ddd', '#695b25') + tri(14, 15, '#333'),
  toolb: gear(8, 7, 5.500, '#d42a2a') + gear(17, 14, 4, '#777') + `<circle cx="12" cy="20" r="4" fill="#9ebde2"/><path d="M11 13h13l-6.500 7z" fill="#444"/>`,
  rproj: `<ellipse cx="11" cy="10" rx="10" ry="7" fill="none" stroke="#888" stroke-width="4"/><text x="8" y="21" font-family="Open Sans" font-weight="800" font-size="18" fill="#1f5fb4">R</text><path d="M11 13h13l-6.500 7z" fill="#233a5c"/>`,
  pyd: py + `<path d="M11 13h13l-6.500 7z" fill="#443a10"/>`,
  clock: `<circle cx="12" cy="12" r="10.500" fill="#f2f2f2" stroke="#999" stroke-width="1.800"/><path d="M12 4v9l6 4" fill="none" stroke="#888" stroke-width="1.800"/>`,
  doc: `<path d="M4 1h11l5 5v17H4z" fill="#fafafa" stroke="#999" stroke-width="1.400"/><path d="M7 7h6M7 11h10M7 14.500h10M7 18h10" stroke="#888" stroke-width="1.400"/>`,
  note: `<rect x="1" y="1" width="17" height="16" rx="2" fill="#fbe34d" stroke="#d0ae2a"/><g transform="translate(8 6) scale(.72)">${pencil()}</g>`,
  specs: `<path d="M0 3h24" stroke="#111" stroke-width="1.600"/><path d="M1 3h9.500q0 7-4.500 7T1 3zM13.500 3H23q-.5 7-5 7t-4.500-7z" fill="#fff" stroke="#111" stroke-width="2"/>${plusB}`,
  grass: `<path d="M12 1l9 9-9 11-9-11z" fill="#fff" stroke="#777"/><path d="M3 12l9 9 9-9M3 14l9 9 9-9" fill="none" stroke="#333"/><path d="M12 19V5M12 18L6 9M12 18l6-9M12 16L9 7M12 16l4-10" stroke="#27a03a" stroke-width="1.300"/><path d="M3 23.500h18" stroke="#888" stroke-width="1.500"/>`,
  saga: `<path d="M21 4.500A10.500 10.500 0 1 0 22.500 13H11M2.500 9l14 12.500M6 5l13 13M21 2.500v3h-7l-6 7" fill="none" stroke="#17559a" stroke-width="2.300"/>`
}

/* Turns centre positions into gaps of a flex row */
const sizes = { grip: 7, sep: 1, arrow: 10, arrowg: 10 }
const row = (list, base = 24) => {
  let end = 0
  return list.map(([n, x, st]) => {
    const w = sizes[n] || base
    const gap = x - w / 2 - end
    end = x + w / 2
    return { n, gap, w, st }
  })
}
const G = 'off'
const bars = [
  row([['grip', 11], ['new', 35], ['open', 68], ['save', 101], ['newlayout', 134], ['mgr', 167], ['style', 200], ['grip', 233], ['hand', 257], ['pan', 290], ['zin', 323], ['zout', 356], ['zfull', 389], ['zsel', 422], ['zlay', 455], ['z11', 488, G], ['zlast', 521], ['znext', 554, G], ['newview', 588], ['newbm', 622], ['bm', 653], ['refresh', 686], ['grip', 719], ['ident', 743, 'on'], ['action', 776, G], ['arrowg', 801], ['select', 827], ['arrow', 852], ['eps', 879], ['arrow', 903], ['desel', 930], ['table', 962], ['abacus', 995], ['gear', 1028, 'on'], ['sigma', 1061], ['ruler', 1094], ['arrow', 1119], ['tip', 1145], ['text', 1178], ['arrow', 1203]]),
  row([['grip', 11], ['dsm', 35], ['geop', 68], ['vnew', 101], ['feather', 134], ['chip', 168], ['sep', 188.5], ['vvirt', 210], ['grip', 243], ['pencils', 267, G], ['pencil', 300], ['saveEd', 333, G], ['addblob', 366, G], ['nodes', 399, G], ['arrowg', 424], ['rows', 450, G], ['trash', 482, G], ['cut', 516, G], ['copy', 549, G], ['paste', 582, G], ['undo', 615, G], ['redo', 648, G], ['grip', 681], ['abcY', 704], ['diag', 738], ['sep', 759.5], ['abcB', 780], ['abcR', 813], ['sep', 835.5], ['g1', 857, G], ['g2', 890, G], ['g3', 923, G], ['g4', 956, G], ['g5', 989, G], ['grip', 1022], ['dbase', 1046], ['grip', 1079], ['gl1', 1103], ['gl2', 1136], ['gl3', 1169], ['grip', 1202], ['py', 1226], ['hammer', 1259], ['plug', 1292], ['grip', 1325], ['help', 1349]]),
  row([['grip', 11], ['cad', 35, G], ['b1', 69, G], ['arrowg', 93], ['b2', 120, G], ['b3', 152, G], ['b4', 186, G], ['b5', 218, G], ['b6', 251, G], ['b7', 284, G], ['b8', 317, G], ['b9', 350, G], ['b10', 383, G], ['b11', 416, G], ['b12', 449, G], ['sc', 482, G], ['sc', 515, G], ['b13', 548, G], ['b14', 581, G], ['b15', 614, G], ['arrowg', 639], ['grip', 665], ['h1', 689, G], ['h2', 722, G], ['h1', 755, G], ['h2', 788, G], ['s1', 822, G], ['s2', 855, G], ['c1', 888, G], ['c2', 921, G]]),
  row([['grip', 11], ['d1', 36, G], ['arrowg', 60], ['d2', 87, G], ['arrowg', 111], ['d3', 137, G], ['arrowg', 162], ['d4', 189, G], ['arrowg', 213], ['d5', 240, G], ['arrowg', 264], ['grip', 290], ['plusbox', 314], ['arrow', 339]])
]
const layerBar = row([['brush', 17.5], ['addgrp', 43], ['eye', 69], ['funnel', 93], ['epsf', 119], ['arrow', 139], ['exp', 161.5], ['col', 186.5], ['rem', 211]], 16)
const idBar = row([['form', 18, G], ['sep', 35.5], ['exp', 53.5], ['col', 78.5], ['expnew', 103.5], ['sep', 121], ['desel', 138.5], ['sep', 155.5], ['copy', 173, G], ['printer', 198, G], ['sep', 215.5], ['identm', 233], ['arrow', 254], ['wrenchd', 277]], 16)
const toolBar = row([['toolb', 18], ['rproj', 44], ['pyd', 69], ['clock', 93], ['doc', 118, 'on'], ['sep', 135.5], ['note', 153], ['sep', 171], ['wrench', 188]], 16)

const menus = [['Pro&ject', 53.5], ['&Edit', 30], ['&View', 37], ['&Layer', 41], ['&Settings', 64], ['&Plugins', 57], ['Vect&or', 50], ['&Raster', 49], ['&Database', 73.5], ['&Web', 36.5], ['&Mesh', 43], ['MMQGIS', 72.5], ['Pro&cessing', 84.5], ['&Help', 37]]

const legend = [['0.3', '#d7191c'], ['0.4', '#fdae61'], ['0.5', '#ffffc0'], ['0.6', '#a6d96a'], ['0.7', '#1a9641']]

const ctx = [
  { t: '&Zoom to Layer', w: 116, i: 'zlay' }, { t: '&Zoom to Selection', w: 146, i: 'zlay', off: 1 },
  { t: '&Show in Overview', w: 141, i: 'specs' }, { t: 'Show Feature Count', w: 160, box: 1 },
  { t: 'Copy Layer', w: 88 }, { t: 'Re&name Layer', w: 109 }, { sep: 1 },
  { t: '&Duplicate Layer', w: 120, i: 'dup' }, { t: '&Remove Layer...', w: 124, i: 'rem' }, { sep: 1 },
  { t: '&Open Attribute Table', w: 164, i: 'table', sel: 1 }, { t: '&Toggle Editing', w: 113, i: 'pencil' },
  { t: '&Filter...', w: 51 }, { t: 'Change Data Source...', w: 174 }, { sep: 1 },
  { t: '&Set Layer Scale Visibility...', w: 199 }, { t: 'Set CRS', w: 62, sub: 1 }, { sep: 1 },
  { t: 'Export', w: 51, sub: 1 }, { sep: 1 }, { t: 'Styles', w: 45, sub: 1 }, { t: '&Properties...', w: 93 }
]

const algos = [['qlogo', 'Vector geometry', 132], ['grass', 'GRASS', 55], ['saga', 'SAGA', 46]]

const plots = [
  '862.4,372.3 902.5,372.7 903.5,391.3 865.7,392.7', '867,401 903,397.3 904,403 868,406.7',
  '868.5,418.3 904.9,414.3 913.4,497.3 873.7,502.7', '880.8,512 914.3,508 914.8,513 881.3,516.7',
  '877,520.7 917,517.3 921,551.7 880.3,556',
  '734.5,685.3 777,681 777.4,693 735.4,697', '739.7,701.7 777,697.3 777.4,702.3 740.2,706.7',
  '740.6,719.7 778.4,714.3 784.5,798.7 749.6,801', '750.5,811.3 783.6,808.7 784.5,814.7 751,817.3',
  '754.8,833.3 788.3,830 788.8,856.3 756.7,859.7',
  '1166.3,756 1203.6,752.3 1205,770.3 1168.2,772.7', '1169.6,777.7 1206.9,773.3 1206.4,779 1170.5,783.3',
  '1171.5,797.3 1208.8,794.3 1218.7,874.3 1180.5,876.7', '1182.3,888.3 1220,885.3 1220,891.3 1183.8,894.7',
  '1185.6,901.3 1224.3,898.3 1227.6,916.3 1188,920.7'
]

const task = {
  chrome: `<circle cx="18" cy="18" r="17" fill="#de4b3c"/><path d="M3.300 9.500A17 17 0 0 0 18 35l7-13H11z" fill="#1aa260"/><path d="M18 35A17 17 0 0 0 33 10H18l7 12z" fill="#ffce44"/><path d="M3.300 9.500A17 17 0 0 1 33 10H18l-8 9z" fill="#de4b3c"/><circle cx="18" cy="18" r="8" fill="#fff"/><circle cx="18" cy="18" r="6.300" fill="#4a8af4"/>`,
  r: `<defs><radialGradient id="rg" cx=".5" cy=".85" r=".8"><stop offset="0" stop-color="#6fd6ff"/><stop offset=".5" stop-color="#2b7ad6"/><stop offset="1" stop-color="#1c3fa8"/></radialGradient></defs><circle cx="18" cy="18" r="17" fill="url(#rg)"/><ellipse cx="18" cy="9" rx="12" ry="7.500" fill="#fff" opacity=".5"/><text x="10.500" y="25" font-family="Liberation Serif" font-size="23" fill="#fff">R</text>`,
  folder: `<path d="M2 5h14l2 3v5H2z" fill="#dfa000"/><path d="M2 9h32v21H2z" fill="#ffd45e"/><path d="M8 32V18h20v14h-5v-7h-10v7z" fill="#3a96dd"/>`,
  ever: `<circle cx="18" cy="18" r="17" fill="#fff"/><path d="M9 13h5V7q2-1.500 6 0c8 0 8 7 7 13-1 6-3 9-8 8-3-1-3-5 0-5l3 0q1-2-2-2l-2 1q-2 2-5 1-4-2-4-10z" fill="#0fae13"/><path d="M8.500 11.500l4.500-4.500v4.500z" fill="#0fae13"/><circle cx="23" cy="15.500" r="1.300" fill="#fff"/>`,
  sub: `<rect width="36" height="36" rx="3" fill="#454547"/><path d="M9 12l18-6v8l-10 3.300 10 3.200v6L9 30v-7l9-3-9-3.200z" fill="#ff9800"/>`,
  git: `<path d="M18 0l8.500 8.500L18 17 9.500 8.500z" fill="#f36b6b"/><path d="M27 9.500l8.500 8.500-8.500 8.500-8.500-8.500z" fill="#6cc04a"/><path d="M9 9.500l8.500 8.500L9 26.500.5 18z" fill="#77a8f5"/><path d="M18 19l8.500 8.500L18 36l-8.500-8.500z" fill="#fbd95e"/><path d="M16 8l2 2v17M18 14l6 6" stroke="#2b291f" stroke-width="2.500" fill="none"/><circle cx="18" cy="11" r="2.500" fill="#2b291f"/><circle cx="24" cy="19" r="2.500" fill="#2b291f"/><circle cx="18" cy="26" r="2.500" fill="#2b291f"/>`,
  snip: `<ellipse cx="12" cy="20" rx="9" ry="6" fill="#9b9b9b"/><ellipse cx="18" cy="10" rx="14.500" ry="9" fill="#f4f4f4" stroke="#e03a3a" stroke-width="1.800" transform="rotate(-22 18 10)"/><path d="M14 7l10 15M24 3l-5 19" stroke="#999" stroke-width="2.500"/><ellipse cx="21" cy="29" rx="4" ry="5.500" fill="none" stroke="#1a7fc4" stroke-width="3"/><ellipse cx="30" cy="23" rx="5" ry="3.500" fill="none" stroke="#1a7fc4" stroke-width="3" transform="rotate(35 30 23)"/>`,
  qgis: `<g transform="scale(1.500)">${qlogo}</g>`
}
const apps = ['chrome', 'r', 'folder', 'ever', 'qgis', 'sub', 'git', 'snip']

/* ---------- vegetation index raster ---------- */
const canvas = ref(null)
const OX = 384, OY = 238, W = 1165, H = 782
const hash = (x, y) => {
  let h = Math.imul(x | 0, 374761393) + Math.imul(y | 0, 668265263)
  h = Math.imul(h ^ (h >>> 13), 1274126177)
  return ((h ^ (h >>> 16)) >>> 0) / 4294967296
}
const noise = (x, y) => {
  const xi = Math.floor(x), yi = Math.floor(y)
  let fx = x - xi, fy = y - yi
  fx = fx * fx * (3 - 2 * fx); fy = fy * fy * (3 - 2 * fy)
  const a = hash(xi, yi), b = hash(xi + 1, yi), c = hash(xi, yi + 1), d = hash(xi + 1, yi + 1)
  return a + (b - a) * fx + (c - a) * fy + (a - b - c + d) * fx * fy - 0.5
}
const stops = [[0.3, 215, 25, 28], [0.4, 253, 174, 97], [0.5, 255, 255, 192], [0.6, 166, 217, 106], [0.7, 26, 150, 65]]
const ramp = (v) => {
  v = Math.max(0.3, Math.min(0.7, v))
  const i = Math.min(3, Math.floor((v - 0.3) * 10))
  const t = (v - stops[i][0]) * 10
  return [1, 2, 3].map((k) => stops[i][k] + (stops[i + 1][k] - stops[i][k]) * t)
}
const lerpAt = (pts, q) => {
  if (q <= pts[0][0]) return pts[0][1]
  for (let i = 1; i < pts.length; i++) {
    if (q <= pts[i][0]) {
      const [a, b] = pts[i - 1], [c, d] = pts[i]
      return b + ((d - b) * (q - a)) / (c - a)
    }
  }
  return pts[pts.length - 1][1]
}
const stripL = [[352, 616], [390, 612], [500, 620], [640, 632], [840, 648], [945, 656]]
const stripR = [[352, 618], [367, 620], [500, 636], [633, 650], [853, 675], [945, 685]]
const mainL = [[355, 641], [410, 643], [500, 655], [606, 667], [612, 673], [630, 676], [640, 670], [653, 671], [820, 690], [925, 701]]
const mainR = [[355, 1262], [400, 1266], [453, 1269], [560, 1280], [620, 1287], [780, 1299], [853, 1308], [880, 1308]]
const topY = [[641, 354], [826, 351], [1020, 350], [1190, 349], [1215, 353], [1262, 355]]
const botY = [[700, 925], [711, 925], [724, 943], [751, 949], [900, 947], [1213, 945], [1250, 941], [1262, 918], [1282, 895], [1308, 880]]
const redL = [[380, 695], [633, 721], [930, 752]]
/* short dark streaks: x, centre y, half length */
const streaks = [[823, 604, 14], [788, 607, 9], [797, 630, 9], [840, 633, 12], [860, 660, 14], [792, 545, 16], [890, 605, 16], [1016, 632, 12], [942, 607, 8], [1157, 395, 12], [1160, 374, 10], [1187, 530, 22], [1192, 560, 18], [1081, 515, 12], [1211, 595, 12], [789, 665, 12], [779, 627, 8], [1226, 622, 8], [766, 608, 8], [920, 630, 8], [849, 462, 14], [855, 845, 10], [1043, 915, 8]]

onMounted(() => {
  const c = canvas.value.getContext('2d')
  const img = c.createImageData(W, H)
  const put = (x, y, r, g, b) => {
    const k = ((y - OY) * W + (x - OX)) * 4
    if (x < OX || x >= OX + W || y < OY || y >= OY + H) return
    img.data[k] = r; img.data[k + 1] = g; img.data[k + 2] = b; img.data[k + 3] = 255
  }
  const gauss = (d, s) => Math.exp(-(d * d) / (s * s))
  const box = (d, h, s) => 1 / (1 + Math.exp((Math.abs(d) - h) / s))
  for (let y = 340; y < 955; y++) {
    const sl = lerpAt(stripL, y), sr = lerpAt(stripR, y), ml = lerpAt(mainL, y), mr = lerpAt(mainR, y), rl = lerpAt(redL, y)
    const near = streaks.filter((s) => Math.abs(y - s[1]) < s[2] * 2)
    for (let x = 608; x < 1312; x++) {
      const u = x - (y - 350) * 0.085
      const px = hash(x, y) - 0.5
      const strip = y > 357 && y < 946 && x >= sl && x <= sr
      const ty = lerpAt(topY, x), by = lerpAt(botY, x)
      const main = x >= ml && x <= mr && y >= ty && y <= by
      if (!strip && !main) {
        if (x > sr && x < ml && y > 357 && y < 940) {
          const e = Math.min(x - sr, ml - x)
          const cl = noise(x / 5, y / 11)
          let p = 0.008 + (cl > 0.16 ? 0.2 : 0) * (y < 600 ? 1 : 0.12)
          if (y > 690 && y < 900) p *= 0.5
          if (e < 1.2) p = 0.5
          else if (e < 4 && ml - x < 4) p += 0.1
          p += 0.85 * gauss(y - (625 - (x - 655) * 0.5), 5) + 0.85 * gauss(y - 656, 5) * gauss(x - 656, 7)
          if (y > 632 && y < 650) p += cl > 0 ? 0.35 : 0
          if (hash(x + 91, y + 17) < p) put(x, y, ...ramp(0.3 + hash(y, x) * (e < 1.2 ? 0.11 : 0.05)))
        }
        continue
      }
      let v = 0.58
      v += noise(x + 0.5, y / 9) * 0.03 + noise(u / 2.1, y / 34) * 0.03 + noise(u / 6, y / 110 + 40) * 0.026
      v += noise(u / 34 + 7, y / 90) * 0.026 + noise(x / 15, y / 24 + 60) * 0.02
      v += noise(x / 1.800, y / 2.600) * 0.035 + px * 0.05
      v -= 0.022 * gauss(x - 930, 150) * gauss(y - 830, 160)
      v -= 0.026 * gauss(x - 1010, 170) * gauss(y - 585, 36)
      v -= 0.01 * gauss(x - 790, 90) * gauss(y - 420, 90)
      v += 0.014 * gauss(x - 1080, 170) * gauss(y - 440, 100)
      v += 0.012 * gauss(x - 1180, 140) * gauss(y - 680, 90)
      v += 0.022 * gauss(x - mr, 20) * (y > 640 ? 1 : 0)
      for (const s of near) v += 0.05 * gauss(x - s[0] - (y - s[1]) * 0.12, 2.6) * gauss(y - s[1], s[2])
      if (strip) v += 0.018 + 0.05 * gauss(y - 395, 60) * gauss(x - sl, 14) + 0.03 * gauss(y - 540, 90) * gauss(x - sl, 10) + 0.05 * gauss(y - 935, 8) + 0.03 * noise(x / 6, y / 16)
      else {
        const dt = y - ty, db = by - y, dl = x - ml
        v += 0.068 * box(dt - 4.500, 4, 1.300) + 0.03 * noise(x / 9, y / 2)
        v -= (0.06 + noise(x / 8, 3) * 0.07 + 0.13 * gauss(x - 690, 16) + 0.06 * gauss(x - 750, 60) + 0.03 * gauss(x - 850, 80)) * gauss(dt - 12 - (x < 850 ? 1 : -1), 3.400)
        v -= 0.03 * gauss(dt - 20, 8) * (noise(x / 20, 5) + 0.5)
        if (db < 11) v += 0.068 * box(db - 6, 4.500, 1.500)
        else v -= 0.04 * gauss(db - 15, 3) + 0.025 * gauss(db - 24, 8) * (1 + noise(x / 12, y / 5))
        const upper = y < 560 ? 1 : Math.max(0, 1 - (y - 560) / 40)
        v -= (0.085 + 0.05 * noise(3, y / 12)) * gauss(dl - 6, 4.500) * upper
        v += 0.05 * gauss(dl - 14, 3) * upper
        if (y > 640) v += 0.04 * gauss(dl - 6, 6) * (y < 840 ? 1 : 0.5) - 0.04 * gauss(dl - 17, 3) * (y < 740 ? 1 : 0)
        const by0 = 621 - (x - 694) * 0.021
        const fade = 1 / (1 + Math.exp(-(x - 702) / 5))
        const bd = y - by0
        let spots = Math.max(0, noise(x / 13 + 3, y / 12)) * 0.19 + 0.07 * gauss(x - 756, 6) + 0.05 * gauss(x - 865, 22) + 0.06 * gauss(x - 925, 16) + 0.07 * gauss(x - 1225, 30)
        for (const s of near) spots -= 0.05 * gauss(x - s[0], 3)
        v -= fade * (0.065 + spots + 0.03 * noise(x / 40, 2)) * box(bd, 7.500, 1.300)
        v += fade * 0.03 * (gauss(bd - 13, 4) + gauss(bd + 11.500, 2) * (x < 1180 ? 1 : 0.5))
        const jx = x - 679, jy = y - 618, jr = Math.hypot(jx, jy * 0.75)
        v += 0.1 * gauss(jr - 12, 5) * (jx > -6 ? 1 : 0) + 0.06 * gauss(jx - 12, 8) * gauss(jy, 7) + 0.06 * gauss(x - 673, 4) * gauss(y - 597, 12)
        if (jr < 8) v = hash(x + 4, y) < 0.88 ? 0.3 + hash(y, x) * 0.07 : 2
        v += 0.09 * gauss(x - mr, 15) * gauss(y - 630, 16)
        if (x > 1225 && y > 850) {
          const d = (y - 940) + (x - 1245) * 1.03
          v += 0.07 * gauss(d + 3, 8) - 0.05 * gauss(d + 21, 7)
        }
        if (v > 1) continue
      }
      if (y > 380 && y < 930 && main) {
        const d = x - rl
        const half = y < 480 ? 2.300 : 2.900
        if (Math.abs(d) < half) {
          const f = noise(3, y / 24) + (y > 700 && y < 760 ? 0.5 : 0) + (y > 795 && y < 830 ? 0.3 : 0)
          const p = 0.55 + f * 0.6 + (Math.abs(d) > half - 1.2 ? 0.15 : 0) - (y > 870 ? 0.3 : 0)
          if (hash(x + 5, y + 3) < p) put(x, y, ...ramp(0.3 + hash(y, x) * 0.05))
          continue
        }
        if (d > 0 && d < 9 && y < 440) v -= hash(x, y + 3) * 0.22 * (noise(x / 3, y / 6) + 0.7)
      }
      if (main && (x - ml < 1.600 || (mr - x < 1.500 && y < 400)) && hash(x, y + 77) < 0.45) v = 0.33
      put(x, y, ...ramp(v))
    }
  }
  /* stray pixels round the edges */
  const dots = (n, x0, x1, fy, s, seed) => {
    for (let i = 0; i < n; i++) {
      const x = Math.round(x0 + (x1 - x0) * hash(i, seed))
      const y = Math.round(fy(x) + (hash(i, seed + 1) - 0.5) * s)
      const col = ramp(0.3 + hash(i, seed + 2) * 0.09)
      put(x, y, ...col)
      if (hash(i, seed + 3) > 0.5) put(x + 1, y, ...col)
    }
  }
  dots(320, 700, 1210, (x) => lerpAt(topY, x) - 1, 3, 11)
  dots(60, 1205, 1262, (x) => lerpAt(topY, x) - 1, 4, 21)
  dots(45, 641, 690, () => 336, 5, 31)
  dots(32, 690, 1140, () => 333, 4, 41)
  dots(62, 1138, 1225, () => 331, 4, 51)
  dots(20, 1232, 1248, () => 332, 12, 61)
  dots(6, 1150, 1220, () => 322, 7, 65)
  dots(180, 730, 1240, (x) => lerpAt(botY, x), 3, 71)
  dots(34, 655, 1130, () => 951, 6, 81)
  dots(14, 1240, 1290, () => 943, 5, 91)
  dots(40, 1262, 1290, (x) => 918 - (x - 1262) * 1.1, 8, 101)
  dots(50, 1290, 1310, (x) => 893 - (x - 1290) * 0.9, 12, 105)
  dots(70, 1290, 1309, () => 912, 3, 111)
  dots(24, 1277, 1284, () => 894, 6, 115)
  dots(12, 1275, 1281, () => 878, 10, 117)
  dots(14, 1294, 1300, () => 362, 6, 121)
  dots(10, 1296, 1300, () => 380, 5, 131)
  dots(50, 641, 647, () => 362, 18, 141)
  dots(16, 615, 619, () => 352, 14, 151)
  dots(30, 1262, 1266, (x) => 358 + (x - 1262) * 11, 40, 161)
  dots(44, 715, 723, () => 819, 10, 171)
  dots(24, 1220, 1232, () => 938, 4, 175)
  dots(3, 772, 778, () => 261, 2, 181)
  dots(3, 1015, 1032, () => 270, 2, 191)
  dots(2, 1318, 1318, () => 949, 1, 201)
  dots(1, 1318, 1318, () => 979, 1, 205)
  c.putImageData(img, 0, 0)
})
</script>

<template>
  <div class="screen">
    <header class="title">
      <svg class="tlogo" viewBox="0 0 24 24" v-html="icons.qlogo" />
      <span v-fit="218.5">Drone Camp Testing - QGIS</span>
      <svg class="wc" viewBox="0 0 160 20" fill="none" stroke="#000" stroke-width="1.200" shape-rendering="crispEdges">
        <path d="M2 10.500h15" />
        <path d="M71.500 6.500h11v11h-11zM75 6V3.500h11v11h-3" />
        <path d="M142 3l15 15M157 3l-15 15" shape-rendering="auto" />
      </svg>
    </header>
    <nav class="menubar">
      <span v-for="m in menus" :key="m[0]" v-fit="m[1]" v-html="mn(m[0])" />
    </nav>
    <div v-for="(b, i) in bars" :key="i" class="bar">
      <div v-for="(t, j) in b" :key="j" class="slot" :class="[t.n, t.st]" :style="{ marginLeft: t.gap + 'px' }">
        <svg v-if="icons[t.n]" width="24" height="24" viewBox="0 0 24 24" v-html="icons[t.n]" />
      </div>
    </div>

    <main class="work">
      <aside class="left">
        <div class="dock"><span v-fit="48">Layers</span><i class="dbtn fl" /><i class="dbtn cl" /></div>
        <div class="mini">
          <div v-for="(t, j) in layerBar" :key="j" class="slot" :class="[t.n, t.st]" :style="{ marginLeft: t.gap + 'px' }">
            <svg v-if="icons[t.n]" width="16" height="16" viewBox="0 0 24 24" v-html="icons[t.n]" />
          </div>
        </div>
        <div class="layers">
          <div class="lrow sel">
            <svg class="chk" viewBox="0 0 20 20"><path d="M4.500 9.500l4 6L15.500 3.500" /></svg>
            <i class="poly" />
            <b class="lname"><span v-fit="218"><u>low_throughput_shapefile</u></span></b>
            <i class="sliver" />
          </div>
          <div class="lrow">
            <i class="tdown" />
            <svg class="chk" viewBox="0 0 20 20"><path d="M4.500 9.500l4 6L15.500 3.500" /></svg>
            <svg class="ras" viewBox="0 0 20 20"><rect width="20" height="20" fill="#a9c6ea" /><path d="M0 0h6.500v6.500H0zM13 0h7v6.500h-7zM6.500 6.500H13V13H6.500zM0 13h6.500v7H0z" fill="#2b3a52" /><path d="M13 13h7v7h-7z" fill="#fff" /></svg>
            <b><span v-fit="173">Solano_4l7l20_index_</span></b>
          </div>
          <div v-for="l in legend" :key="l[0]" class="leg">
            <i :style="{ background: l[1] }" /><span v-fit="23.5">{{ l[0] }}</span>
          </div>
        </div>
      </aside>

      <section class="map">
        <canvas ref="canvas" :width="W" :height="H" />
        <svg class="plots" :viewBox="`${OX} ${OY} ${W} ${H}`">
          <polygon v-for="p in plots" :key="p" :points="p" />
        </svg>
      </section>

      <aside class="right">
        <div class="dock"><span v-fit="119.500">Identify Results</span><i class="dbtn fl" /><i class="dbtn cl" /></div>
        <div class="mini">
          <div v-for="(t, j) in idBar" :key="j" class="slot" :class="[t.n, t.st]" :style="{ marginLeft: t.gap + 'px' }">
            <svg v-if="icons[t.n]" width="16" height="16" viewBox="0 0 24 24" v-html="icons[t.n]" />
          </div>
        </div>
        <div class="grid">
          <div class="ghead"><div class="ghl"><span v-fit="57.500">Feature</span></div><div><span v-fit="42">Value</span></div></div>
          <div class="gbody" />
          <div class="hscroll"><i class="al" /><i class="thumb" /><i class="groove" /><i class="ar" /></div>
        </div>
        <div class="mode"><span v-fit="38">Mode</span><div class="combo"><span v-fit="92">Current layer</span><i class="td" /></div></div>
        <div class="view"><span v-fit="34">View</span><div class="combo"><span v-fit="32">Tree</span><i class="td" /></div><button><span v-fit="32">Help</span></button></div>
        <div class="dots" />
        <div class="dock d2"><span v-fit="153">Processing Toolbox</span><i class="dbtn fl" /><i class="dbtn cl" /></div>
        <div class="mini m2">
          <div v-for="(t, j) in toolBar" :key="j" class="slot" :class="[t.n, t.st]" :style="{ marginLeft: t.gap + 'px' }">
            <svg v-if="icons[t.n]" width="16" height="16" viewBox="0 0 24 24" v-html="icons[t.n]" />
          </div>
        </div>
        <div class="find">
          <svg width="14" height="14" viewBox="0 0 14 14" fill="none" stroke="#999" stroke-width="1.300"><circle cx="6" cy="5.500" r="4.500" /><path d="M9.300 8.800l4 4" /></svg>
          <span v-fit="60">segment</span>
          <svg class="clr" width="13" height="10" viewBox="0 0 13 10"><path d="M4 0h9v10H4L0 5z" fill="#999" /><path d="M6 2.500l5 5M11 2.500l-5 5" stroke="#fff" stroke-width="1.400" /></svg>
        </div>
        <div class="algs">
          <div class="alist">
            <div v-for="a in algos" :key="a[1]" class="alg"><i class="tri" /><svg width="22" height="22" viewBox="0 0 24 24" v-html="icons[a[0]]" /><span v-fit="a[2]">{{ a[1] }}</span></div>
          </div>
          <div class="vscroll"><i class="au" /><i class="vg" /><i class="vt" /><i class="ad" /></div>
        </div>
        <div class="dots d3" />
        <div class="dock d4"><span v-fit="111.500">Results Viewer</span><i class="dbtn fl" /><i class="dbtn cl" /></div>
        <div class="results" />
        <div class="dots d5" />
        <div class="last" />
      </aside>
      <i class="vdots" />
    </main>

    <div class="ctx">
      <template v-for="(m, i) in ctx" :key="i">
        <hr v-if="m.sep">
        <div v-else class="ci" :class="{ hot: m.sel, dim: m.off }">
          <div class="cicon">
            <svg v-if="m.i" width="23" height="23" viewBox="0 0 24 24" v-html="icons[m.i]" />
            <i v-if="m.box" class="cbox" />
          </div>
          <span v-fit="m.w" v-html="mn(m.t)" />
          <i v-if="m.sub" class="tri" />
        </div>
      </template>
    </div>

    <footer class="task">
      <div class="start"><svg width="25" height="25" viewBox="0 0 25 25" fill="#fff"><path d="M0 3.500l10.500-1.500v10H0zM11.500 1.800L25 0v12H11.500zM0 13h10.500v10L0 21.500zM11.500 13H25v12l-13.500-1.800z" /></svg></div>
      <div class="search">
        <svg width="26" height="26" viewBox="0 0 26 26" fill="none" stroke="#111" stroke-width="1.700"><circle cx="16" cy="9" r="7.800" /><path d="M10.500 14.500L1 24.500" /></svg>
        <span v-fit="197">Type here to search</span>
      </div>
      <div class="cell cort"><svg width="26" height="26" viewBox="0 0 26 26"><circle cx="13" cy="13" r="10.500" fill="none" stroke="#fff" stroke-width="2.600" /></svg></div>
      <div class="cell tv"><svg width="26" height="26" viewBox="0 0 26 26" fill="none" stroke="#fff" stroke-width="1.400"><path d="M1.500 1v3.500h15V1M1.500 8h15v11h-15zM1.500 25v-3.500h15V25M23.500 1v5M23.500 13v12" /><path d="M22 8h3v3h-3z" fill="#fff" stroke="none" /></svg></div>
      <div class="apps">
        <div v-for="a in apps" :key="a" class="app" :class="a"><svg width="36" height="36" viewBox="0 0 36 36" v-html="task[a]" /><i class="line" /></div>
      </div>
      <div class="tray">
        <svg width="20" height="24" viewBox="0 0 20 24" fill="none" stroke="#fff" stroke-width="1.500"><path d="M1 16l9-9 9 9" /></svg>
        <svg width="24" height="24" viewBox="0 0 24 24" fill="none" stroke="#fff" stroke-width="1.400"><rect x="7" y="7" width="16" height="11" /><path d="M11 9h10v7H9v-3z" fill="#fff" /><path d="M1 6h6v4q-3 3-6 0zM2.500 6V3M5.500 6V3M4 11v6h3" /></svg>
        <svg width="22" height="24" viewBox="0 0 22 24" fill="none" stroke="#fff" stroke-width="1.300"><path d="M2 21Q3 5 19 4" opacity=".8" /><path d="M6 21Q7 9 19 8M10 21q1-8 9-8.500M14 21q1-4 5-4.500" /><circle cx="18" cy="20" r="1.600" fill="#fff" stroke="none" /></svg>
        <svg width="22" height="24" viewBox="0 0 22 24" fill="none" stroke="#fff" stroke-width="1.300"><path d="M1 9h4l6-5v16l-6-5H1zM14 9l7 7M21 9l-7 7" /></svg>
        <svg width="24" height="24" viewBox="0 0 24 24" fill="#fff"><path d="M6.500 2l5.500 3.600-5.500 3.600L1 5.600zM17.500 2L23 5.600l-5.500 3.600L12 5.600zM6.500 9.500l5.500 3.600-5.500 3.600L1 13zM17.500 9.500L23 13l-5.500 3.600L12 13zM12 15.500l5.500 3.600L12 22.500l-5.500-3.400z" /></svg>
        <svg width="25" height="24" viewBox="0 0 25 24"><path d="M6 20a5.500 5.500 0 0 1-1-10.500 7.500 7.500 0 0 1 14.500 0A5.500 5.500 0 0 1 19 20z" fill="#fff" /><path d="M12.500 17V10M8.500 12.500l4-4 4 4" stroke="#2b291f" stroke-width="2.600" fill="none" /></svg>
      </div>
      <div class="clockt"><span v-fit="65">7:45 PM</span><span v-fit="74">6/1/2020</span></div>
      <svg class="notif" width="26" height="26" viewBox="0 0 26 26" fill="none" stroke="#fff" stroke-width="1.500"><path d="M1.500 1.500h23v18h-7.500l-4 4.500v-4.500H1.500z" /></svg>
      <i class="desk" />
    </footer>
  </div>
</template>

<style>
body { margin: 0; overflow: hidden; }
</style>

<style scoped>
* { box-sizing: border-box; }
.screen { width: 1920px; height: 1080px; position: relative; display: flex; flex-direction: column; background: #efefef; font: 17.2px/22px "Open Sans", "Noto Sans", sans-serif; color: #000; overflow: hidden; white-space: nowrap; }
svg { display: block; flex: none; overflow: visible; }
i { display: block; flex: none; }
span { display: inline-block; flex: none; }
:deep(u), u { text-decoration-thickness: 1px; text-underline-offset: 2px; text-decoration-skip-ink: none; }

.title { height: 34px; flex: none; background: #fff; display: flex; align-items: center; padding: 2px 0 0 2px; }
.tlogo { width: 23px; height: 23px; margin: -3px 6px 0 0; }
.wc { width: 160px; height: 20px; margin: -4px 26px 0 auto; }
.menubar { height: 30px; flex: none; border-bottom: 1px solid #d4d4d4; display: flex; align-items: center; gap: 17px; padding: 3px 0 0 13.500px; background: #efefef; }
.bar { height: 43px; flex: none; border-bottom: 1px solid #b6b6b6; background: linear-gradient(#fafafa, #eeeeee); display: flex; align-items: center; }
.bar:nth-of-type(4) { height: 42px; }
.slot { flex: none; width: 24px; height: 24px; position: relative; }
.slot.off { opacity: .38; filter: grayscale(.75); }
.slot.on::before { content: ""; position: absolute; inset: -3px -4px -4px; background: #dcdcdc; border: 1px solid #b0b0b0; border-radius: 3px; }
.slot.on svg { position: relative; }
.slot.grip { width: 7px; height: 17px; background: radial-gradient(circle at 1px 1px, #c4c4c4 .8px, transparent 1px) 1px 0 / 3px 3px; }
.slot.sep { width: 1px; height: 20px; background: #d0d0d0; }
.slot.arrow, .slot.arrowg, .td, .tdown { width: 10px; height: 6px; background: #5d5d5d; clip-path: polygon(0 0, 100% 0, 50% 100%); }
.slot.arrowg { background: #a8a8a8; }

.work { display: flex; height: 785px; flex: none; position: relative; }
.left { width: 374px; }
.dock { height: 24px; padding: 2px 0 0 4px; display: flex; align-items: center; }
.dbtn { width: 11px; height: 11px; border: 1.300px solid #666; border-radius: 2px; margin: -4px 0 0 4px; position: relative; }
.dbtn.fl { margin-left: auto; }
.dbtn.fl::before, .dbtn.fl::after { content: ""; position: absolute; border: 1px solid #555; width: 4px; height: 4px; left: 1px; top: 3px; background: #eee; }
.dbtn.fl::before { left: 3px; top: 1px; }
.dbtn.cl { margin-right: 2px; background: linear-gradient(45deg, transparent 42%, #444 42% 58%, transparent 58%), linear-gradient(-45deg, transparent 42%, #444 42% 58%, transparent 58%); }
.mini { height: 33px; display: flex; align-items: center; padding-bottom: 3px; }
.mini .slot { width: 16px; height: 16px; }
.mini .sep { width: 1px; height: 12px; }
.mini .arrow { width: 10px; height: 6px; }
.mini .slot.on::before { inset: -4px; }
.layers { height: 728px; background: #fff; border: 1px solid #b6b6b6; border-width: 1px 1px 0; }
.lrow { height: 27px; display: flex; align-items: center; position: relative; padding-left: 33px; }
.lrow.sel { background: linear-gradient(90deg, #0078d7 85px, #1883de 85px); color: #fff; }
.chk { width: 21px; height: 21px; background: #fff; border: 1px solid #bbb; fill: none; stroke: #000; stroke-width: 2.600; margin-right: 6px; }
.poly { width: 22px; height: 22px; background: #5684a8; border: 1px solid #3a5a78; margin-right: 6px; }
.lrow b { line-height: 24px; padding-top: 2px; letter-spacing: 0; }
.sliver { position: absolute; right: 1px; top: 2px; width: 6px; height: 24px; background: #e4e8ec; }
.tdown { position: absolute; left: 10px; top: 9px; }
.ras { width: 20px; height: 20px; margin: 1px 7px 0 3px; }
.leg { height: 27px; display: flex; align-items: center; padding-left: 63px; }
.leg i { width: 20px; height: 20px; margin: -1px 6px 0 0; }
.leg span { padding-top: 2px; }

.map { width: 1167px; margin: 2px 0 0 9px; border: 1px solid #b6b6b6; border-bottom: 0; background: #fff; position: relative; }
canvas { display: block; }
.plots { position: absolute; left: 0; top: 0; width: 1165px; height: 782px; }
.plots polygon { fill: #7d8a8d; stroke: #222; stroke-width: 1.500; }

.right { width: 361px; margin-left: 9px; display: flex; flex-direction: column; }
.right .dock, .right .mini { flex: none; }
.grid { height: 195px; flex: none; border: 1px solid #b6b6b6; background: #fff; display: flex; flex-direction: column; }
.ghead { height: 31px; display: flex; background: linear-gradient(#fff, #ededed); border-bottom: 1px solid #b0b0b0; line-height: 33px; }
.ghead div { padding-left: 3px; }
.ghead .ghl { width: 257px; border-right: 1px solid #c4c4c4; }
.gbody { flex: 1; }
.hscroll { height: 22px; display: flex; border-top: 1px solid #b6b6b6; background: #e6e6e6; }
.al, .ar, .au, .ad { background: linear-gradient(#fff, #f3f3f3); width: 20px; position: relative; }
.al::after, .ar::after, .au::after, .ad::after { content: ""; position: absolute; background: #555; }
.al::after { left: 6px; top: 5px; width: 6px; height: 11px; clip-path: polygon(100% 0, 100% 100%, 0 50%); }
.ar::after { left: 6px; top: 5px; width: 6px; height: 11px; clip-path: polygon(0 0, 100% 50%, 0 100%); }
.thumb { width: 281px; background: linear-gradient(#fff, #f0f0f0); border: 1px solid #b6b6b6; border-width: 0 1px; }
.groove { width: 37px; }
.ar { border-left: 1px solid #b6b6b6; flex: 1; }
.mode, .view { display: flex; align-items: center; padding-left: 5px; flex: none; }
.mode { height: 31px; margin-top: 5px; }
.combo, button { border: 1px solid #ababab; border-radius: 3px; background: linear-gradient(#fff, #eee); display: flex; align-items: center; padding: 2px 11px 0 4px; justify-content: space-between; }
.combo .td { margin-top: -3px; }
.mode .combo { width: 307px; height: 32px; margin-left: 6px; }
.mode > span, .view > span { padding-top: 3px; }
.view { height: 27px; margin-top: 6px; }
.view .combo { width: 93px; height: 27px; margin-left: 6px; }
button { width: 50px; height: 26px; margin: 1px 5px 0 auto; padding: 2px 0 0; justify-content: center; font: inherit; }
.dots { height: 1px; width: 17px; margin: 10px 0 0 174px; flex: none; background: repeating-linear-gradient(90deg, #aaa 0 1px, transparent 1px 3px); }
.d2 { margin-top: 3px; }
.m2 { height: 33px; padding: 0 0 3px; }
.find { height: 27px; flex: none; border: 1px solid #ababab; border-radius: 3px; background: #fff; display: flex; align-items: center; padding: 0 8px; }
.find span { margin: 1px 0 0 6px; }
.find svg { margin-top: -2px; }
.find .clr { margin: -2px 0 0 auto; }
.algs { height: 104px; flex: none; border: 1px solid #b6b6b6; background: #fff; display: flex; }
.alist { flex: 1; }
.alg { height: 27px; display: flex; align-items: center; padding-left: 12px; }
.tri { width: 6px; height: 11px; background: #555; clip-path: polygon(0 0, 100% 50%, 0 100%); }
.alg .tri { margin: -1px 16px 0 0; }
.alg svg { margin-top: -2px; }
.alg span { margin: 2px 0 0 7px; }
.vscroll { width: 21px; border-left: 1px solid #b6b6b6; display: flex; flex-direction: column; }
.au, .ad { height: 20px; }
.au::after { left: 4px; top: 7px; width: 11px; height: 6px; clip-path: polygon(50% 0, 100% 100%, 0 100%); }
.ad::after { left: 4px; top: 7px; width: 11px; height: 6px; clip-path: polygon(0 0, 100% 0, 50% 100%); }
.vg { height: 16px; background: #e6e6e6; border: 1px solid #b6b6b6; border-width: 1px 0; }
.vt { flex: 1; background: linear-gradient(90deg, #fff, #f3f3f3); border-bottom: 1px solid #b6b6b6; }
.d3 { margin-top: 4px; }
.d4 { height: 24px; margin-top: 3px; }
.results { height: 192px; margin-top: -2px; flex: none; background: #fff; border: 1px solid #b6b6b6; }
.d5 { margin-top: 2px; }
.last { flex: 1; margin-top: 3px; background: #fff; border: 1px solid #b6b6b6; border-bottom: 0; }
.vdots { position: absolute; left: 1555px; top: 421px; width: 1px; height: 17px; background: repeating-linear-gradient(#aaa 0 1px, transparent 1px 3px); }

.ctx { position: absolute; left: 262px; top: 308px; width: 330px; height: 571px; background: #fff; border: 1px solid #999; box-shadow: 3px 3px 2px rgba(0, 0, 0, .45); }
.ci { height: 33px; display: flex; align-items: center; position: relative; }
.ci:first-child { height: 32px; }
.ci > span { margin-top: 2px; }
.cicon { width: 37px; padding-left: 7px; flex: none; margin-top: -1px; }
.cbox { width: 21px; height: 21px; border: 1px solid #b6b6b6; }
.ci .tri { margin: -2px 6px 0 auto; }
.hot { background: #0078d7; color: #fff; box-shadow: inset 0 0 0 1px #2d96ee; }
.dim { color: #787878; }
.dim svg { opacity: .35; filter: grayscale(.7); }
.ctx hr { border: 0; margin: 0 6px; height: 2px; position: relative; }
.ctx hr::before { content: ""; position: absolute; left: 0; right: 0; top: -1px; height: 1px; background: #bebebe; }

.task { height: 60px; background: #2d2b20; display: flex; align-items: center; margin-top: auto; flex: none; color: #fff; }
.start { width: 72px; padding-left: 24px; }
.search { width: 516px; height: 60px; background: #f2f2f2; border: 2px solid #bdbdbd; color: #333; font-size: 20.500px; display: flex; align-items: center; padding-left: 16px; }
.search svg { margin-top: -1px; }
.search span { margin: 3px 0 0 16px; }
.cell { display: flex; justify-content: center; }
.cort { width: 72px; }
.tv { width: 76px; padding-right: 3px; }
.apps { display: flex; }
.app { width: 75px; height: 60px; display: flex; justify-content: center; align-items: center; position: relative; padding-right: 2px; }
.line { position: absolute; left: 7px; right: 7px; bottom: 0; height: 3px; background: #76b9ed; }
.app.qgis { background: linear-gradient(90deg, transparent 1px, #6b6a61 1px 74px, transparent 74px); }
.app.qgis .line { left: 1px; right: 1px; }
.app.chrome .line { background: linear-gradient(90deg, #76b9ed 47px, #5380a6 47px); }
.tray { display: flex; align-items: center; gap: 13px; margin-left: 192px; }
.clockt { width: 110px; display: flex; flex-direction: column; align-items: center; gap: 7px; font-size: 17px; margin-left: 2px; }
.notif { margin: 2px 0 0 14px; }
.desk { width: 1px; height: 60px; background: #77766e; margin: 0 6px 0 auto; }
</style>
